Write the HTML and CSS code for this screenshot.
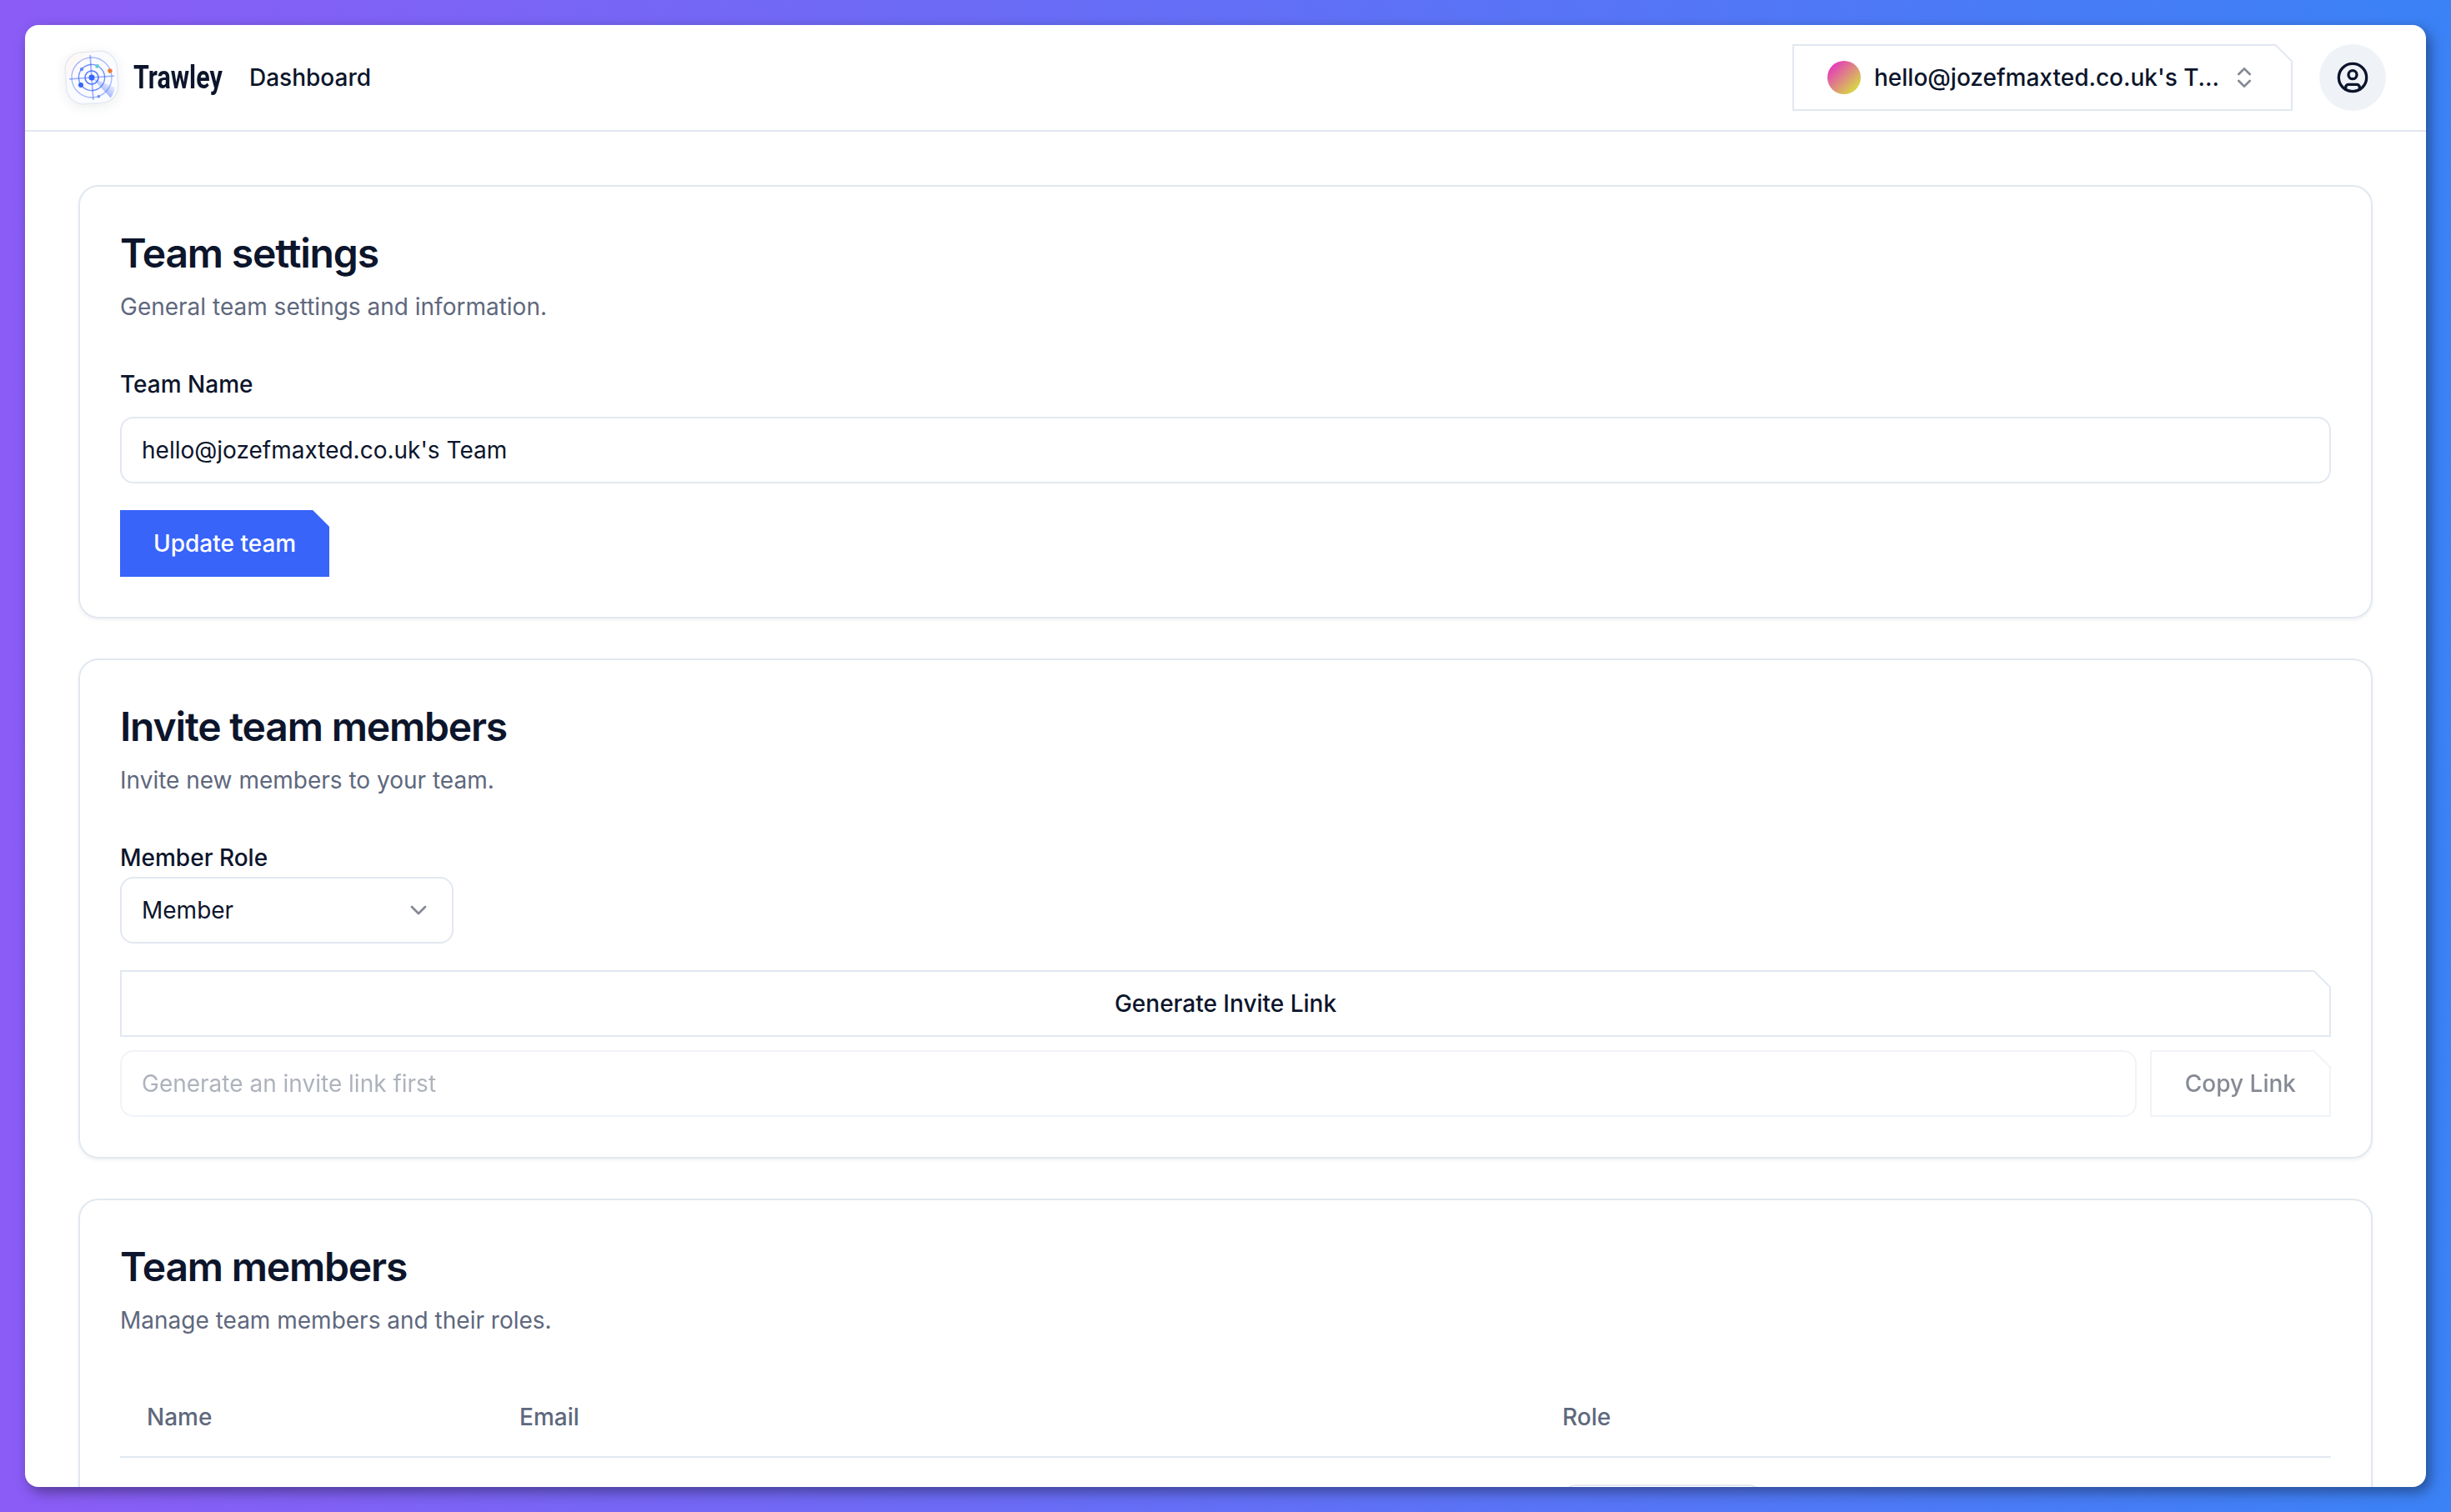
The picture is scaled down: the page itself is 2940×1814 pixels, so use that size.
FILE: index.html
```html
<!DOCTYPE html>
<html lang="en">
<head>
<meta charset="utf-8">
<title>Trawley – Team settings</title>
<link rel="stylesheet" href="styles.css">
</head>
<body>
<div class="window">
  <header class="header">
    <a class="brand">
      <svg class="logo" viewBox="-32 -32 64 64" fill="none">
        <defs>
          <linearGradient id="tile" x1="-30" y1="-30" x2="30" y2="30" gradientUnits="userSpaceOnUse">
            <stop offset="0" stop-color="#fff5f0"/><stop offset=".35" stop-color="#fafbff"/><stop offset="1" stop-color="#fbfcff"/>
          </linearGradient>
          <linearGradient id="sweep" x1="14" y1="22" x2="24" y2="10" gradientUnits="userSpaceOnUse">
            <stop offset="0" stop-color="#3864fa" stop-opacity=".5"/><stop offset="1" stop-color="#3864fa" stop-opacity=".06"/>
          </linearGradient>
        </defs>
        <g transform="rotate(-4)">
          <rect x="-31" y="-31" width="62" height="62" rx="20" fill="url(#tile)" stroke="#e4e9f2" stroke-width="1.4"/>
          <path d="M0 0 27 14Q26 20 21 26Z" fill="url(#sweep)"/>
          <g stroke="#3864fa">
            <path d="M0-27V27M-27 0H27" stroke-opacity=".45" stroke-width="1.9"/>
            <circle r="24" stroke-opacity=".45" stroke-width="1.3"/>
            <circle r="15.6" stroke-opacity=".7" stroke-width="1.4"/>
            <circle r="8" stroke-opacity=".85" stroke-width="1.6"/>
          </g>
          <circle r="3.5" fill="#3864fa"/>
          <circle cx="-13.6" cy="8" r="3" fill="#3864fa"/>
          <circle cx="-11.3" cy="-10.7" r="2.1" fill="#5f86fb"/>
          <circle cx="7.6" cy="-13.2" r="2.4" fill="#5fd0cf"/>
          <circle cx="22.5" cy="-6.4" r="2.7" fill="#f07a36"/>
          <circle cx="6.7" cy="23.2" r="1.8" fill="#6a8dfb"/>
        </g>
      </svg>
      <span class="wordmark">Trawley</span>
    </a>
    <a class="nav-link">Dashboard</a>
    <button class="cut switcher">
      <span class="avatar"></span>
      <span class="switcher-name">hello@jozefmaxted.co.uk's T...</span>
      <svg class="icon chevron" viewBox="0 0 24 24"><path d="m7 15 5 5 5-5M7 9l5-5 5 5"/></svg>
    </button>
    <button class="account">
      <svg class="icon account-icon" viewBox="0 0 24 24"><circle cx="12" cy="12" r="10"/><circle cx="12" cy="10" r="3"/><path d="M7 20.662V19a2 2 0 0 1 2-2h6a2 2 0 0 1 2 2v1.662"/></svg>
    </button>
  </header>
  <main class="main">
    <section class="card">
      <h2 class="card-title">Team settings</h2>
      <p class="card-desc">General team settings and information.</p>
      <label class="label label-spaced">Team Name</label>
      <div class="field"><span>hello@jozefmaxted.co.uk's Team</span></div>
      <button class="primary">Update team</button>
    </section>
    <section class="card">
      <h2 class="card-title">Invite team members</h2>
      <p class="card-desc">Invite new members to your team.</p>
      <label class="label">Member Role</label>
      <div class="field select"><span>Member</span>
        <svg class="icon chevron" viewBox="0 0 24 24"><path d="m6 9 6 6 6-6"/></svg>
      </div>
      <button class="cut generate"><span>Generate Invite Link</span></button>
      <div class="link-row">
        <div class="field link-field"><span>Generate an invite link first</span></div>
        <button class="cut copy"><span>Copy Link</span></button>
      </div>
    </section>
    <section class="card">
      <h2 class="card-title">Team members</h2>
      <p class="card-desc">Manage team members and their roles.</p>
      <div class="members members-head"><span>Name</span><span>Email</span><span>Role</span></div>
      <div class="members members-row"><span></span><span></span><span><i class="field role-select"></i></span></div>
    </section>
  </main>
</div>
</body>
</html>
```
FILE: styles.css
```css
:root {
  --border: #e2e8f0;
  --ink: #0c152b;
  --muted: #5e687d;
  --primary: #3864fa;
}
* { box-sizing: border-box; margin: 0; }
body {
  height: 1814px;
  padding: 30px;
  overflow: hidden;
  background: linear-gradient(90deg, #8b5cf6, #3b82f6);
  color: var(--ink);
  font: 400 28px/40px Inter, sans-serif;
}
button { border: 0; background: none; color: inherit; font: inherit; font-weight: 500; }
.icon { fill: none; stroke: currentColor; stroke-width: 2; stroke-linecap: round; stroke-linejoin: round; flex: none; }
.chevron { width: 32px; height: 32px; opacity: .5; }

.window {
  height: 1754px;
  overflow: hidden;
  border-radius: 16px;
  background: #fff;
  box-shadow: 5px 6px 16px rgba(0, 0, 0, .4);
}
.header {
  display: flex;
  align-items: center;
  height: 128px;
  padding: 0 48px;
  border-bottom: 2px solid var(--border);
}
.brand { display: flex; align-items: center; gap: 18px; width: 221px; }
.logo { width: 64px; height: 64px; overflow: visible; flex: none; filter: drop-shadow(0 3px 7px rgba(15, 23, 42, .08)); }
.wordmark {
  font: 700 39px/40px "Roboto", sans-serif;
  transform: scaleX(.78);
  transform-origin: left;
}
.nav-link { font-weight: 500; }

/* Outlined button with a clipped top-right corner */
.cut {
  position: relative;
  display: flex;
  align-items: center;
  justify-content: center;
  height: 80px;
  padding: 0 42px;
  background: var(--border);
  clip-path: polygon(0 0, calc(100% - 20px) 0, 100% 20px, 100% 100%, 0 100%);
}
.cut::before {
  content: "";
  position: absolute;
  inset: 2px;
  background: #fff;
  clip-path: polygon(0 0, calc(100% - 18.8px) 0, 100% 18.8px, 100% 100%, 0 100%);
}
.cut > * { position: relative; }

.switcher { width: 600px; margin-left: auto; justify-content: flex-start; }
.avatar { width: 40px; height: 40px; margin-right: 16px; border-radius: 50%; background: linear-gradient(135deg, #e535c0 10%, #d6e03f 90%); }
.switcher .chevron { margin-left: auto; }
.account { display: grid; place-items: center; width: 80px; height: 80px; margin-left: 32px; border-radius: 50%; background: #eff3f8; }
.account-icon { width: 40px; height: 40px; }

.main { display: flex; flex-direction: column; gap: 48px; padding: 64px; }
.card {
  display: flex;
  flex-direction: column;
  padding: 48px;
  border: 2px solid var(--border);
  border-radius: 24px;
  box-shadow: 0 2px 4px rgba(0, 0, 0, .06);
}
.card-title { font-size: 48px; font-weight: 600; line-height: 64px; letter-spacing: -.0245em; }
.card-desc { margin: 12px 0 48px; color: var(--muted); }
.label { height: 48px; font-weight: 500; line-height: 50px; }
.label-spaced { margin-bottom: 16px; }
.field {
  display: flex;
  align-items: center;
  justify-content: space-between;
  height: 80px;
  padding: 0 24px;
  border: 2px solid var(--border);
  border-radius: 16px;
}
.primary {
  align-self: flex-start;
  height: 80px;
  margin-top: 32px;
  padding: 0 40px;
  background: var(--primary);
  color: #fff;
  clip-path: polygon(0 0, calc(100% - 20px) 0, 100% 20px, 100% 100%, 0 100%);
}
.select { width: 400px; }
.generate { margin-top: 32px; }
.link-row { display: flex; gap: 16px; margin-top: 16px; }
.link-field { flex: 1; color: var(--muted); opacity: .5; }
.copy { opacity: .5; }

.members { display: grid; grid-template-columns: 447px 1251px 1fr; }
.members > span { padding: 0 32px; }
.members-head { height: 97px; align-items: center; border-bottom: 2px solid var(--border); color: var(--muted); font-weight: 500; }
.members-row { padding-top: 32px; }
.role-select { width: 240px; }
```
